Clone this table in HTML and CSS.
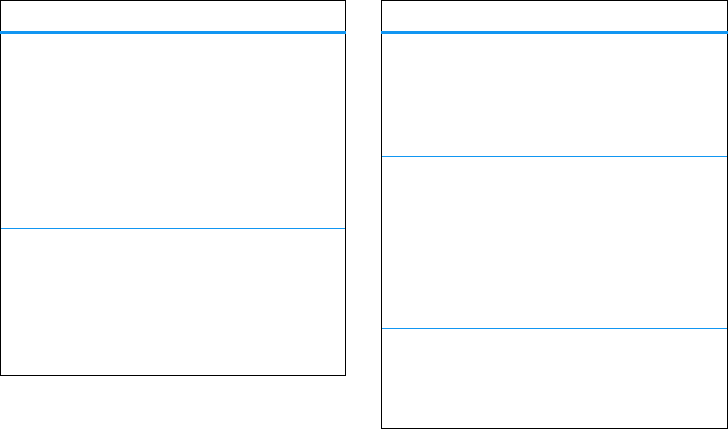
FILE: index.html
```html
<!DOCTYPE html>
<html lang="en">
<head>
    <meta charset="UTF-8">
    <meta name="viewport" content="width=device-width, initial-scale=1.0">
    <title>Tables</title>
    <link rel="stylesheet" href="styles.css">
</head>
<body>

<div class="page">
    <div class="panel panel-left">
        <div class="panel-head"></div>
        <div class="row row-a"></div>
        <div class="row row-b"></div>
    </div>
    <div class="panel panel-right">
        <div class="panel-head"></div>
        <div class="row row-c"></div>
        <div class="row row-d"></div>
        <div class="row row-e"></div>
    </div>
</div>

</body>
</html>
```

FILE: styles.css
```css
body {
    margin: 0;
    padding: 0;
    background: #fff;
    font-family: 'Liberation Sans', sans-serif;
    overflow: hidden;
}

.page {
    display: flex;
    align-items: flex-start;
    gap: 35px;
}

.panel {
    border: 1px solid #000;
    background: #fff;
}
.panel-left {
    width: 344px;
}
.panel-right {
    width: 345px;
}

.panel-head {
    height: 30px;
    border-bottom: 3px solid #1196f2;
    margin: 0 -1px;
}

.row + .row {
    border-top: 1px solid #1196f2;
}
.row-a { height: 194px; }
.row-b { height: 146px; }
.row-c { height: 122px; }
.row-d { height: 171px; }
.row-e { height: 99px; }
```
